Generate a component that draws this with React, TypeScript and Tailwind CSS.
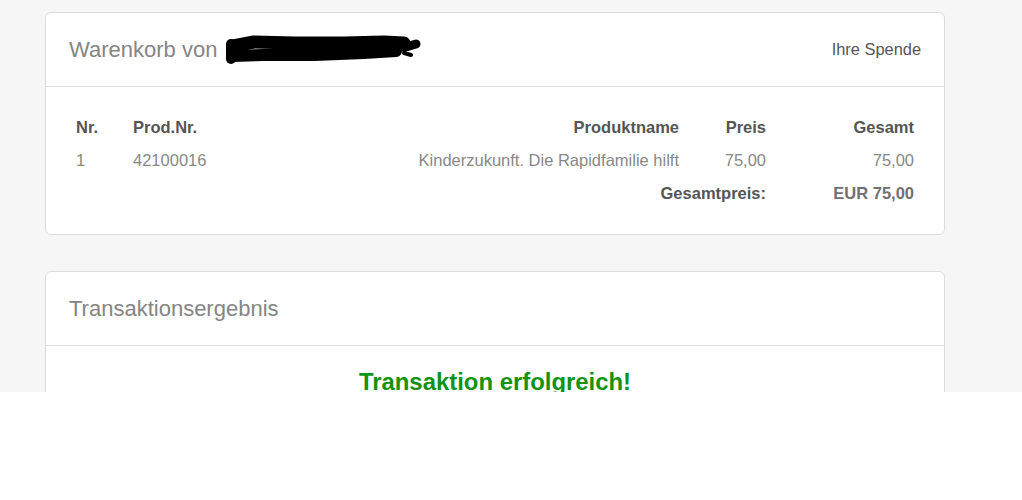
import React from 'react';

const cardCls = 'bg-white border border-[#dddddd] rounded-[6px]';

function Scribble() {
  return (
    <svg width="200" height="32" viewBox="0 0 200 32" className="block ml-[7px] mt-[1px]">
      <g stroke="#000" strokeLinecap="round" strokeLinejoin="round" fill="none">
        <path d="M9 12 L30 8 L70 9 L120 9 L160 8 L180 9" strokeWidth="13" />
        <path d="M8 22 L40 21 L90 21 L140 19 L172 17" strokeWidth="12" />
        <path d="M7 10 L7 25" strokeWidth="10" />
        <path d="M160 13 L182 13 L192 10" strokeWidth="9" />
        <path d="M180 19 L187 21" strokeWidth="4" />
      </g>
    </svg>
  );
}

export default function App() {
  return (
    <div className="w-[1022px] h-[500px] bg-white font-[family-name:Liberation_Sans,Arial,sans-serif]">
      <div className="h-[392px] overflow-hidden bg-[#f6f6f6] pt-[12px] pl-[45px]">
        <div className="w-[900px] flex flex-col gap-[36px]">
          <div className={cardCls}>
            <div className="h-[74px] px-[23px] flex items-center justify-between border-b border-[#e0e0e0]">
              <div className="flex items-center">
                <span className="text-[22px] text-[#858585]">Warenkorb von</span>
                <Scribble />
              </div>
              <span className="text-[16.4px] text-[#555555]">Ihre Spende</span>
            </div>
            <div className="px-[23px] py-[24px]">
              <table className="w-[852px] table-fixed text-[16.5px] border-collapse">
                <colgroup>
                  <col className="w-[57px]" />
                  <col className="w-[200px]" />
                  <col className="w-[360px]" />
                  <col className="w-[87px]" />
                  <col className="w-[148px]" />
                </colgroup>
                <tbody>
                  <tr className="h-[33px] font-bold text-[#555555]">
                    <td className="px-[7px] text-left">Nr.</td>
                    <td className="px-[7px] text-left">Prod.Nr.</td>
                    <td className="px-[7px] text-right">Produktname</td>
                    <td className="px-[7px] text-right">Preis</td>
                    <td className="px-[7px] text-right">Gesamt</td>
                  </tr>
                  <tr className="h-[33px] text-[#888888]">
                    <td className="px-[7px] text-left">1</td>
                    <td className="px-[7px] text-left">42100016</td>
                    <td className="px-[7px] text-right whitespace-nowrap">Kinderzukunft. Die Rapidfamilie hilft</td>
                    <td className="px-[7px] text-right">75,00</td>
                    <td className="px-[7px] text-right">75,00</td>
                  </tr>
                  <tr className="h-[33px] font-bold">
                    <td></td>
                    <td></td>
                    <td colSpan={2} className="px-[7px] text-right text-[#555555]">Gesamtpreis:</td>
                    <td className="px-[7px] text-right text-[#707070]">EUR 75,00</td>
                  </tr>
                </tbody>
              </table>
            </div>
          </div>

          <div className={cardCls}>
            <div className="h-[74px] px-[23px] flex items-center border-b border-[#e0e0e0]">
              <span className="text-[22px] text-[#858585]">Transaktionsergebnis</span>
            </div>
            <div className="px-[23px] pt-[22px] pb-[24px] text-center">
              <div className="text-[23.9px] leading-[28px] font-bold text-[#129412]">Transaktion erfolgreich!</div>
            </div>
          </div>
        </div>
      </div>
    </div>
  );
}
